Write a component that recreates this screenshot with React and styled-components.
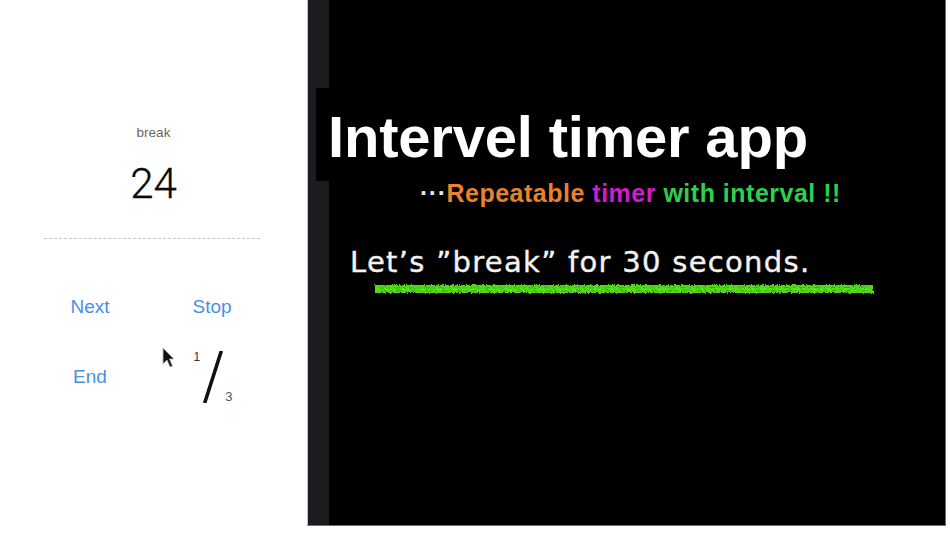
import styled, { createGlobalStyle } from 'styled-components';

const GlobalStyle = createGlobalStyle`
  html, body {
    margin: 0;
    padding: 0;
    background: #ffffff;
  }
  body {
    font-family: "Liberation Sans", Arial, sans-serif;
  }
`;

const Screen = styled.div`
  display: flex;
  align-items: flex-start;
  width: 950px;
  height: 534px;
  overflow: hidden;
  background: #ffffff;
`;

/* ---------- phone side ---------- */

const Phone = styled.section`
  position: relative;
  display: flex;
  flex-direction: column;
  align-items: center;
  width: 307px;
  height: 534px;
  padding-top: 126px;
  box-sizing: border-box;
`;

const Phase = styled.div`
  font-size: 13.5px;
  line-height: 1;
  color: #666;
`;

const Count = styled.div`
  margin-top: 23px;
  font-family: Roboto, "Liberation Sans", sans-serif;
  font-weight: 300;
  font-size: 42px;
  line-height: 1;
  color: #0a0a0a;
  -webkit-text-stroke: 0.3px #0a0a0a;
`;

const Divider = styled.hr`
  align-self: flex-start;
  width: 216px;
  margin: 33px 0 0 44px;
  border: 0;
  border-top: 1px dashed #c4c4c4;
`;

const Controls = styled.div`
  align-self: flex-start;
  display: grid;
  grid-template-columns: 122px 122px;
  grid-auto-rows: 70px;
  margin: 33px 0 0 29px;
`;

const Cell = styled.div`
  display: flex;
  align-items: center;
  justify-content: center;
`;

const Action = styled.button`
  padding: 0;
  border: 0;
  background: none;
  font-family: "Liberation Sans", Arial, sans-serif;
  font-size: 19px;
  line-height: 1;
  color: #4a90e2;
  cursor: pointer;
`;

const Fraction = styled.div`
  display: flex;
  align-items: stretch;
  height: 52px;
  margin-left: 2px;
`;

const Digit = styled.span`
  align-self: ${(p) => (p.$low ? 'flex-end' : 'flex-start')};
  font-size: ${(p) => (p.$low ? '13px' : '12px')};
  line-height: 1;
  color: ${(p) => (p.$low ? '#555' : '#333')};
  margin: ${(p) => (p.$low ? '0 0 0 2px' : '0 3px 0 0')};
`;

const Pointer = styled.svg`
  position: absolute;
  left: 161px;
  top: 347px;
`;

/* ---------- slide side ---------- */

const Slide = styled.section`
  display: flex;
  width: 639px;
  height: 526px;
  box-sizing: border-box;
  background: #000;
  border-left: 1px solid #c4c4c4;
  border-right: 1px solid #6a6a6a;
  border-bottom: 1px solid #707070;
`;

const Gutter = styled.div`
  flex: 0 0 21px;
  background: #1c1b1f;
`;

const Stage = styled.div`
  flex: 1;
  display: flex;
  flex-direction: column;
  align-items: flex-start;
`;

const TitleBar = styled.div`
  align-self: stretch;
  height: 93px;
  margin: 88px 0 0 -13px;
  padding: 5px 0 0 12px;
  box-sizing: border-box;
  background: #000;
`;

const Title = styled.h1`
  margin: 0;
  font-family: "Liberation Sans", Arial, sans-serif;
  font-weight: 700;
  font-size: 58px;
  line-height: 88px;
  letter-spacing: -0.2px;
  color: #fff;
`;

const Tagline = styled.p`
  margin: 0 0 0 91px;
  font-family: "Liberation Sans", Arial, sans-serif;
  font-weight: 700;
  font-size: 25px;
  line-height: 1;
  letter-spacing: 0.5px;
  color: #e6e6e6;
`;

const Tint = styled.span`
  color: ${(p) => p.$color};
`;

const Caption = styled.p`
  margin: 42px 0 0 21px;
  font-family: "DejaVu Sans", sans-serif;
  font-size: 29px;
  line-height: 1;
  letter-spacing: 1.3px;
  color: #f2f2f2;
  -webkit-text-stroke: 0.4px #f2f2f2;
`;

const Marker = styled.svg`
  display: block;
  margin: 6px 0 0 44px;
`;

function Highlighter() {
  return (
    <Marker width="502" height="12" viewBox="0 0 502 12">
      <defs>
        <filter id="rough" x="-2%" y="-60%" width="104%" height="220%">
          <feTurbulence type="fractalNoise" baseFrequency="0.8 0.35" numOctaves="2" seed="4" />
          <feDisplacementMap in="SourceGraphic" scale="4" />
        </filter>
      </defs>
      <g filter="url(#rough)">
        <rect x="2" y="2" width="498" height="8" fill="#4fd815" />
        <path d="M6 5 L496 4.5 M8 8 L494 7.6" stroke="#2fa30c" strokeWidth="0.8" strokeDasharray="6 3 2 4" />
        <path d="M4 6.5 L498 6" stroke="#7cf03a" strokeWidth="0.8" strokeDasharray="3 5 7 2" />
      </g>
    </Marker>
  );
}

export default function App() {
  return (
    <>
      <GlobalStyle />
      <Screen>
        <Phone>
          <Phase>break</Phase>
          <Count>24</Count>
          <Divider />
          <Controls>
            <Cell>
              <Action>Next</Action>
            </Cell>
            <Cell>
              <Action>Stop</Action>
            </Cell>
            <Cell>
              <Action>End</Action>
            </Cell>
            <Cell>
              <Fraction>
                <Digit>1</Digit>
                <svg width="20" height="52" viewBox="0 0 20 52">
                  <line x1="18" y1="1" x2="2" y2="51" stroke="#111" strokeWidth="3.6" strokeLinecap="round" />
                </svg>
                <Digit $low>3</Digit>
              </Fraction>
            </Cell>
          </Controls>
          <Pointer width="14" height="22" viewBox="0 0 14 22">
            <path d="M2 1 L2 17 L6 13 L9 20 L11.5 19 L8.5 12 L13 12 Z" fill="#111" stroke="#bbb" strokeWidth="0.8" />
          </Pointer>
        </Phone>

        <Slide>
          <Gutter />
          <Stage>
            <TitleBar>
              <Title>Intervel timer app</Title>
            </TitleBar>
            <Tagline>
              ···<Tint $color="#e8822b">Repeatable</Tint> <Tint $color="#d01ccf">timer</Tint>{' '}
              <Tint $color="#2fcf4e">with interval !!</Tint>
            </Tagline>
            <Caption>Let’s ”break” for 30 seconds.</Caption>
            <Highlighter />
          </Stage>
        </Slide>
      </Screen>
    </>
  );
}
